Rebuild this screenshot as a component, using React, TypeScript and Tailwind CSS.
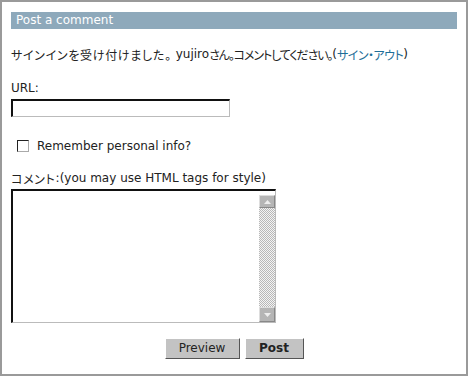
import React from "react";

const font = { fontFamily: '"DejaVu Sans", Verdana, "Noto Sans CJK JP", sans-serif' };
const jp = { fontFamily: '"Noto Sans CJK JP", sans-serif' };

export default function App() {
  return (
    <div className="w-[468px] h-[376px] bg-white border-2 border-[#9a9a9a] box-border text-[12px] text-[#222] leading-[15px]" style={font}>
      <div className="pl-[9px] pr-[9px] pt-[10px]">
        <div className="h-[17px] bg-[#8ea9bb] text-white pl-[5px] leading-[17px] text-[12px]">Post a comment</div>
        <div className="mt-[18px] h-[15px] flex items-center whitespace-nowrap">
          <span style={jp} className="text-[12px] [font-feature-settings:'palt'] tracking-[0.7px]">サインインを受け付けました。</span>
          <span className="ml-[4px]">yujiro</span>
          <span style={jp} className="text-[12px] [font-feature-settings:'palt'] tracking-[-1.1px]">さん。コメントしてください。</span>
          <span>(</span>
          <span style={jp} className="text-[12px] [font-feature-settings:'palt'] tracking-[-0.5px] text-[#1e6e98]">サイン・アウト</span>
          <span>)</span>
        </div>
        <div className="mt-[19px] h-[15px] leading-[15px]">URL:</div>
        <div className="mt-[3px] w-[219px] h-[18px] border-t-2 border-l-2 border-b border-r border-t-[#111] border-l-[#111] border-b-[#bbb] border-r-[#bbb] bg-white" />
        <div className="mt-[22px] flex items-center h-[14px]">
          <div className="ml-[6px] w-[12px] h-[12px] border border-t-[#222] border-l-[#222] border-b-[#aaa] border-r-[#aaa] bg-white" />
          <span className="ml-[8px]">Remember personal info?</span>
        </div>
        <div className="mt-[18px] h-[15px] flex items-center whitespace-nowrap">
          <span style={jp} className="text-[12px] [font-feature-settings:'palt'] tracking-[0.7px]">コメント</span>
          <span>:(you may use HTML tags for style)</span>
        </div>
        <div className="mt-[3px] w-[265px] h-[134px] flex border-t-2 border-l-2 border-b border-r border-t-[#111] border-l-[#111] border-b-[#bbb] border-r-[#bbb] bg-white">
          <div className="flex-1" />
          <div className="w-[16px] flex flex-col pt-[4px]">
            <div className="h-[13px] bg-[#b5b5b5] flex items-center justify-center border border-t-[#ddd] border-l-[#ddd] border-b-[#888] border-r-[#888]">
              <svg width="7" height="4" viewBox="0 0 7 4"><path d="M0 4 L3.5 0 L7 4 Z" fill="#eee" /></svg>
            </div>
            <div className="flex-1 bg-[repeating-conic-gradient(#b8b8b8_0_25%,#f4f4f4_0_50%)] bg-[length:2px_2px]" />
            <div className="h-[15px] bg-[#b5b5b5] flex items-center justify-center border border-t-[#ddd] border-l-[#ddd] border-b-[#888] border-r-[#888]">
              <svg width="7" height="4" viewBox="0 0 7 4"><path d="M0 0 L3.5 4 L7 0 Z" fill="#eee" /></svg>
            </div>
          </div>
        </div>
        <div className="mt-[15px] flex justify-center gap-[5px]">
          <div className="w-[75px] h-[21px] bg-[#c3c3c3] border border-t-white border-l-white border-b-[#555] border-r-[#555] flex items-center justify-center text-[12px]">Preview</div>
          <div className="w-[59px] h-[21px] bg-[#c3c3c3] border border-t-white border-l-white border-b-[#555] border-r-[#555] flex items-center justify-center text-[12px] font-bold">Post</div>
        </div>
      </div>
    </div>
  );
}
